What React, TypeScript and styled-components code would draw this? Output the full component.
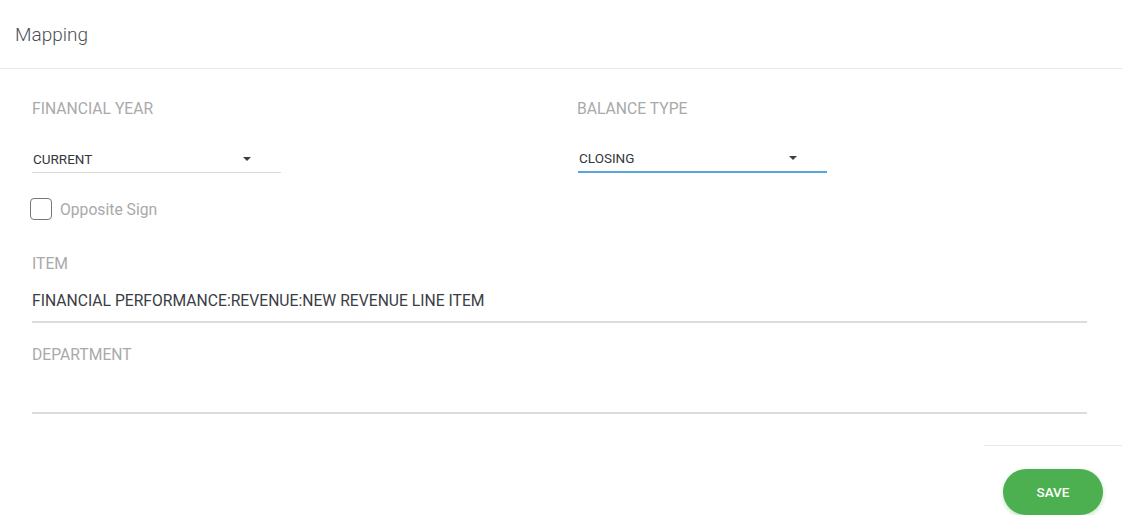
import React from "react";
import styled, { createGlobalStyle } from "styled-components";

const Global = createGlobalStyle`
  html, body { margin: 0; padding: 0; background: #fff; }
  body { font-family: Roboto, "Liberation Sans", Arial, sans-serif; }
  * { box-sizing: border-box; }
`;

const Card = styled.div`
  width: 1122px;
  background: #fff;
`;

const Header = styled.div`
  height: 69px;
  padding: 23px 15px 0;
  border-bottom: 1px solid #e6e8ec;
`;

const Title = styled.h1`
  margin: 0;
  font-size: 19px;
  font-weight: 300;
  color: #4a4f57;
  line-height: 24px;
`;

const Body = styled.div`
  padding: 30px 35px 0 32px;
`;

const Row = styled.div`
  display: grid;
  grid-template-columns: 545px 1fr;
`;

const Field = styled.div`
  display: flex;
  flex-direction: column;
`;

const Label = styled.div`
  font-size: 15.7px;
  color: #a9a9ab;
  line-height: 20px;
  text-transform: uppercase;
`;

const Select = styled.div<{ $active?: boolean }>`
  margin-top: 28px;
  width: 249px;
  height: 26px;
  display: flex;
  align-items: center;
  justify-content: space-between;
  padding: 1px 30px 3px 1px;
  font-size: 13.5px;
  color: #333740;
  border-bottom: ${(p) => (p.$active ? "2px solid #5aa5dc" : "1px solid #d9d9d9")};
  margin-left: ${(p) => (p.$active ? "1px" : "0")};
`;

const Caret = styled.span`
  width: 0;
  height: 0;
  border-left: 4px solid transparent;
  border-right: 4px solid transparent;
  border-top: 4px solid #3a3f48;
`;

const CheckRow = styled.label`
  display: flex;
  align-items: center;
  gap: 8px;
  margin-top: 25px;
  margin-left: -2px;
  font-size: 15.7px;
  color: #a9a9ab;
`;

const Box = styled.span`
  width: 22px;
  height: 22px;
  border: 1px solid #777;
  border-radius: 4px;
`;

const WideField = styled.div<{ $top: number }>`
  margin-top: ${(p) => p.$top}px;
  display: flex;
  flex-direction: column;
`;

const Value = styled.div`
  height: 49px;
  padding-top: 17px;
  font-size: 15.7px;
  line-height: 20px;
  color: #3a3d44;
  border-bottom: 2px solid #dcdcdc;
`;

const Footer = styled.div`
  display: flex;
  flex-direction: column;
  align-items: flex-end;
  margin-top: 31px;
`;

const FooterLine = styled.div`
  width: 138px;
  border-top: 1px solid #e8e8e8;
`;

const SaveButton = styled.button`
  margin-top: 23px;
  margin-right: 19px;
  width: 100px;
  height: 46px;
  border: none;
  border-radius: 23px;
  background: #4caf50;
  color: #fff;
  font-family: Roboto, "Liberation Sans", Arial, sans-serif;
  font-size: 13.5px;
  font-weight: 500;
  box-shadow: 0 2px 4px rgba(76, 175, 80, 0.35);
`;

export default function App() {
  return (
    <Card>
      <Global />
      <Header>
        <Title>Mapping</Title>
      </Header>
      <Body>
        <Row>
          <Field>
            <Label>Financial Year</Label>
            <Select>
              <span>CURRENT</span>
              <Caret />
            </Select>
          </Field>
          <Field>
            <Label>Balance Type</Label>
            <Select $active>
              <span>CLOSING</span>
              <Caret />
            </Select>
          </Field>
        </Row>
        <CheckRow>
          <Box />
          <span>Opposite Sign</span>
        </CheckRow>
        <WideField $top={34}>
          <Label>Item</Label>
          <Value>FINANCIAL PERFORMANCE:REVENUE:NEW REVENUE LINE ITEM</Value>
        </WideField>
        <WideField $top={22}>
          <Label>Department</Label>
          <Value />
        </WideField>
      </Body>
      <Footer>
        <FooterLine />
        <SaveButton>SAVE</SaveButton>
      </Footer>
    </Card>
  );
}
